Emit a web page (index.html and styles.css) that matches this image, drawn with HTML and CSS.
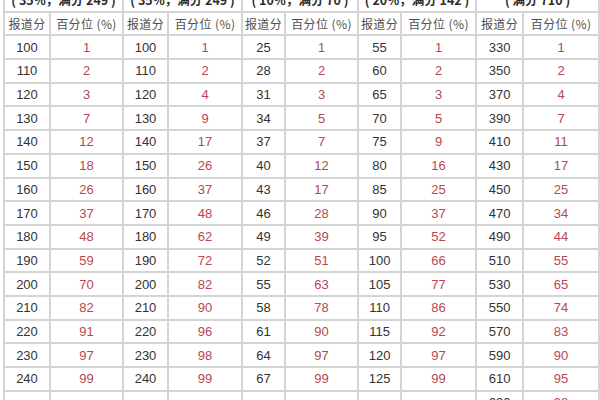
FILE: index.html
```html
<!DOCTYPE html>
<html>
<head>
<meta charset="utf-8">
<link rel="stylesheet" href="styles.css">
</head>
<body>
<table class="score">
  <colgroup>
    <col class="c-a"><col class="c-b">
    <col class="c-c"><col class="c-d">
    <col class="c-e"><col class="c-f">
    <col class="c-g"><col class="c-h">
    <col class="c-i"><col class="c-j">
  </colgroup>
  <thead>
    <tr class="title">
      <th colspan="2">( 35%，满分 249 )</th>
      <th colspan="2">( 35%，满分 249 )</th>
      <th colspan="2">( 10%，满分 70 )</th>
      <th colspan="2">( 20%，满分 142 )</th>
      <th colspan="2">( 满分 710 )</th>
    </tr>
    <tr class="head">
      <th>报道分</th><th>百分位 (%)</th>
      <th>报道分</th><th>百分位 (%)</th>
      <th>报道分</th><th>百分位 (%)</th>
      <th>报道分</th><th>百分位 (%)</th>
      <th>报道分</th><th>百分位 (%)</th>
    </tr>
  </thead>
  <tbody>
    <tr><td>100</td><td class="p">1</td><td>100</td><td class="p">1</td><td>25</td><td class="p">1</td><td>55</td><td class="p">1</td><td>330</td><td class="p">1</td></tr>
    <tr><td>110</td><td class="p">2</td><td>110</td><td class="p">2</td><td>28</td><td class="p">2</td><td>60</td><td class="p">2</td><td>350</td><td class="p">2</td></tr>
    <tr><td>120</td><td class="p">3</td><td>120</td><td class="p">4</td><td>31</td><td class="p">3</td><td>65</td><td class="p">3</td><td>370</td><td class="p">4</td></tr>
    <tr><td>130</td><td class="p">7</td><td>130</td><td class="p">9</td><td>34</td><td class="p">5</td><td>70</td><td class="p">5</td><td>390</td><td class="p">7</td></tr>
    <tr><td>140</td><td class="p">12</td><td>140</td><td class="p">17</td><td>37</td><td class="p">7</td><td>75</td><td class="p">9</td><td>410</td><td class="p">11</td></tr>
    <tr><td>150</td><td class="p">18</td><td>150</td><td class="p">26</td><td>40</td><td class="p">12</td><td>80</td><td class="p">16</td><td>430</td><td class="p">17</td></tr>
    <tr><td>160</td><td class="p">26</td><td>160</td><td class="p">37</td><td>43</td><td class="p">17</td><td>85</td><td class="p">25</td><td>450</td><td class="p">25</td></tr>
    <tr><td>170</td><td class="p">37</td><td>170</td><td class="p">48</td><td>46</td><td class="p">28</td><td>90</td><td class="p">37</td><td>470</td><td class="p">34</td></tr>
    <tr><td>180</td><td class="p">48</td><td>180</td><td class="p">62</td><td>49</td><td class="p">39</td><td>95</td><td class="p">52</td><td>490</td><td class="p">44</td></tr>
    <tr><td>190</td><td class="p">59</td><td>190</td><td class="p">72</td><td>52</td><td class="p">51</td><td>100</td><td class="p">66</td><td>510</td><td class="p">55</td></tr>
    <tr><td>200</td><td class="p">70</td><td>200</td><td class="p">82</td><td>55</td><td class="p">63</td><td>105</td><td class="p">77</td><td>530</td><td class="p">65</td></tr>
    <tr><td>210</td><td class="p">82</td><td>210</td><td class="p">90</td><td>58</td><td class="p">78</td><td>110</td><td class="p">86</td><td>550</td><td class="p">74</td></tr>
    <tr><td>220</td><td class="p">91</td><td>220</td><td class="p">96</td><td>61</td><td class="p">90</td><td>115</td><td class="p">92</td><td>570</td><td class="p">83</td></tr>
    <tr><td>230</td><td class="p">97</td><td>230</td><td class="p">98</td><td>64</td><td class="p">97</td><td>120</td><td class="p">97</td><td>590</td><td class="p">90</td></tr>
    <tr><td>240</td><td class="p">99</td><td>240</td><td class="p">99</td><td>67</td><td class="p">99</td><td>125</td><td class="p">99</td><td>610</td><td class="p">95</td></tr>
    <tr><td></td><td class="p"></td><td></td><td class="p"></td><td></td><td class="p"></td><td></td><td class="p"></td><td>630</td><td class="p">98</td></tr>
  </tbody>
</table>
</body>
</html>
```

FILE: styles.css
```css
html, body {
  margin: 0;
  padding: 0;
  background: #ffffff;
  overflow: hidden;
}

.score {
  margin: -13px 0 0 3px;
  border-collapse: collapse;
  table-layout: fixed;
  width: 595px;
  font-family: "Liberation Sans", "Noto Sans CJK SC", sans-serif;
  font-size: 13px;
  color: #333333;
}

.c-a { width: 46px; }
.c-b { width: 73px; }
.c-c { width: 45px; }
.c-d { width: 74px; }
.c-e { width: 43px; }
.c-f { width: 73px; }
.c-g { width: 43px; }
.c-h { width: 75px; }
.c-i { width: 47px; }
.c-j { width: 76px; }

.score th,
.score td {
  border: 2px solid #d4d4d4;
  padding: 0;
  text-align: center;
  vertical-align: middle;
  white-space: nowrap;
  overflow: hidden;
}

.score tr {
  height: 23.7px;
}

.title th {
  font-family: "Noto Sans CJK SC", sans-serif;
  font-weight: bold;
  font-size: 12.5px;
  color: #2e2e2e;
}

.head th {
  font-family: "Noto Sans CJK SC", sans-serif;
  font-weight: normal;
  font-size: 12px;
  letter-spacing: 0.4px;
  color: #505050;
}

.score td.p {
  color: #b9474f;
}
```
